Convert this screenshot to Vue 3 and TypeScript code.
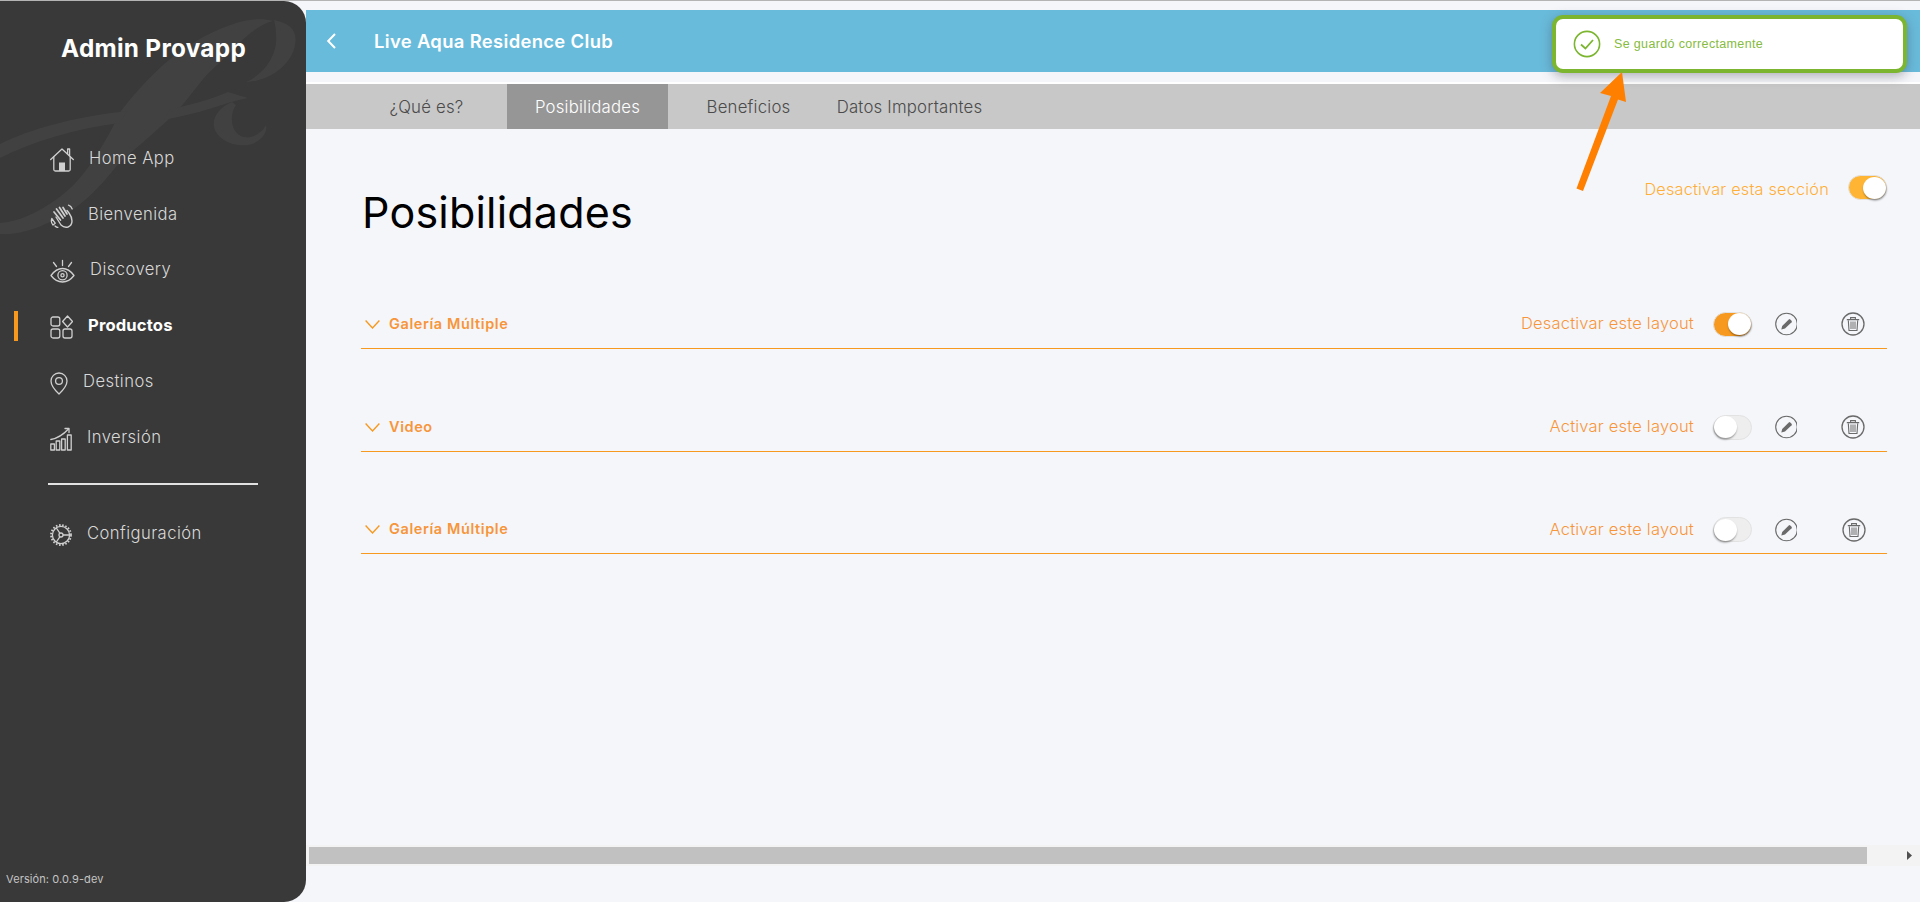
<script setup lang="ts">
interface NavItem { label: string; icon: string; w: number; active?: boolean }
const nav: NavItem[] = [
  { label: 'Home App', icon: 'home', w: 24 },
  { label: 'Bienvenida', icon: 'clap', w: 23 },
  { label: 'Discovery', icon: 'eye', w: 25 },
  { label: 'Productos', icon: 'grid', w: 23, active: true },
  { label: 'Destinos', icon: 'pin', w: 18 },
  { label: 'Inversión', icon: 'chart', w: 22 },
]
const tabs = ['¿Qué es?', 'Posibilidades', 'Beneficios', 'Datos Importantes']
const rows = [
  { title: 'Galería Múltiple', action: 'Desactivar este layout', on: true },
  { title: 'Video', action: 'Activar este layout', on: false },
  { title: 'Galería Múltiple', action: 'Activar este layout', on: false },
]
</script>

<template>
  <div class="page">
    <aside class="sidebar">
      <svg class="watermark" width="306" height="260" viewBox="0 0 306 260" aria-hidden="true">
        <path d="M0 222C24 220 48 206 67 190C88 172 106 140 121 110C138 88 163 60 190 44C215 28 250 13 273 20C257 24 243 38 236 46C224 58 214 66 204 77C192 92 182 106 170 117C152 134 136 147 119 162C107 177 97 189 85 199C70 212 60 217 50 221C34 229 16 234 0 233Z" />
        <path d="M274 19C290 22 298 30 295 44C292 62 272 80 246 81C266 72 278 52 276 34C276 28 275 23 274 19Z" />
        <path d="M0 143C30 128 74 116 127 110L120 122C74 128 34 140 0 157Z" />
        <path d="M170 108C190 104 212 98 228 91L248 97C240 99 234 100 228 102C210 108 190 114 164 119Z" />
        <path d="M232 101C220 106 212 116 214 126C217 138 232 146 248 144C260 142 268 132 266 124C262 132 252 138 244 136C232 134 228 116 236 104Z" />
      </svg>

      <div class="brand">Admin Provapp</div>

      <nav class="nav">
        <a v-for="item in nav" :key="item.label" class="nav-item" :class="{ active: item.active }">
          <svg class="nav-icon" :style="{ width: item.w + 'px' }" :viewBox="`0 0 ${item.w} 24`" fill="none" stroke="currentColor" stroke-width="1.3" stroke-linecap="round" stroke-linejoin="round">
            <template v-if="item.icon === 'home'">
              <path d="M0.7 11.5L12 1L23.3 11.5" />
              <path d="M17.6 5.5V1H19.6V7.5" />
              <path d="M3.8 9V21.5Q3.8 23 5.3 23H18.7Q20.2 23 20.2 21.5V9" />
              <rect x="9" y="14.5" width="6" height="8.5" fill="currentColor" stroke="none" />
            </template>
            <template v-else-if="item.icon === 'clap'">
              <path d="M6 13L11 21Q14 24 18 23Q22 21.5 22 17Q22 13 19 9L17 6.500" stroke-width="1.4" />
              <path d="M4 8L10.500 16M6.500 5L13 14M9.500 3.500L15 12M13 3.500L17 10" stroke-width="1.7" />
              <path d="M18.500 1.200Q21.200 2 22.200 5" stroke-width="1.3" />
              <path d="M1.800 14.500Q0.500 18.500 3 21L5.200 19.200Z" stroke-width="1.3" />
              <path d="M5 22Q6.500 23.500 8 23.300" stroke-width="1.2" />
            </template>
            <template v-else-if="item.icon === 'eye'">
              <path d="M1 16.5Q6 9.5 12.5 9.5Q19 9.5 24 16.5Q19 23 12.5 23Q6 23 1 16.5Z" />
              <circle cx="12.5" cy="16.3" r="4.6" />
              <circle cx="12.5" cy="16.3" r="1.6" />
              <path d="M12.5 1.5V6.5M3.5 3.5L6.5 7.5M21.5 3.5L18.5 7.5" />
            </template>
            <template v-else-if="item.icon === 'grid'">
              <rect x="1" y="2" width="8.8" height="9" rx="2" />
              <rect x="1" y="14" width="8.8" height="9" rx="2" />
              <rect x="13" y="14" width="9" height="9" rx="2" />
              <path d="M17.5 1L22.5 6.5L17.5 12L12.6 6.5Z" />
            </template>
            <template v-else-if="item.icon === 'pin'">
              <path d="M9 23Q1 15.5 1 10A8 8 0 0 1 17 10Q17 15.5 9 23Z" />
              <circle cx="9" cy="10" r="3.4" />
            </template>
            <template v-else-if="item.icon === 'chart'">
              <rect x="0.8" y="17" width="3.6" height="6" />
              <rect x="6.2" y="14" width="3.6" height="9" />
              <rect x="11.6" y="12" width="3.6" height="11" />
              <rect x="17.4" y="8" width="3.8" height="15" />
              <path d="M0.8 12.5Q10 11 18.5 2" />
              <path d="M15 1.5H19V5.5" />
            </template>
          </svg>
          <span>{{ item.label }}</span>
        </a>
      </nav>

      <div class="divider"></div>

      <a class="nav-item config">
        <svg class="nav-icon" width="22" viewBox="0 0 22 24" fill="none" stroke="currentColor" stroke-width="1.3" stroke-linejoin="round">
          <circle cx="11" cy="12" r="8.6" />
          <circle cx="11" cy="12" r="10" stroke-width="1.8" stroke-dasharray="1.6 1.6" />
          <circle cx="11" cy="12" r="2" />
          <path d="M13 12H20M10 10.3L6 4.5M10 13.7L6 19.5" />
        </svg>
        <span>Configuración</span>
      </a>

      <div class="version">Versión: 0.0.9-dev</div>
    </aside>

    <main class="main">
      <header class="topbar">
        <svg class="back" width="11" height="16" viewBox="0 0 11 16" fill="none" stroke="#fff" stroke-width="2">
          <path d="M9 1L2.2 8L9 15" />
        </svg>
        <h2 class="topbar-title">Live Aqua Residence Club</h2>
      </header>

      <div class="tabs">
        <div v-for="(tab, i) in tabs" :key="tab" class="tab" :class="{ current: i === 1 }">{{ tab }}</div>
      </div>

      <section class="content">
        <div class="title-row">
          <h1 class="title">Posibilidades</h1>
          <div class="section-toggle">
            <span class="section-label">Desactivar esta sección</span>
            <span class="toggle on amber"><i></i></span>
          </div>
        </div>

        <div v-for="(row, i) in rows" :key="i" class="row">
          <div class="row-left">
            <svg width="15" height="9" viewBox="0 0 15 9" fill="none" stroke="#f7991f" stroke-width="1.4">
              <path d="M0.6 0.6L7.5 8L14.4 0.6" />
            </svg>
            <span class="row-title">{{ row.title }}</span>
          </div>
          <div class="row-right">
            <span class="row-action">{{ row.action }}</span>
            <span class="toggle" :class="{ on: row.on }"><i></i></span>
            <svg class="pencil" width="22" height="24" viewBox="0 0 22 24" fill="none">
              <circle cx="11.5" cy="12" r="10.8" stroke="#6a6a6a" stroke-width="1.1" />
              <path d="M6.300 17.500L7.200 14L13.800 7.400Q14.500 6.800 15.200 7.400L16.600 8.800Q17.200 9.500 16.600 10.200L10 16.600Z" fill="#6a6a6a" />
            </svg>
            <svg class="trash" :class="{ nudged: i === 2 }" width="24" height="24" viewBox="0 0 24 24" fill="none" stroke="#6a6a6a">
              <circle cx="12" cy="12" r="11" stroke-width="1.3" />
              <path d="M5.8 7.6H18.2M9.6 7.2V5.6H14.4V7.2" stroke-width="1.1" />
              <path d="M7.3 8.4L8 18.5H16L16.7 8.4" stroke-width="1.1" />
              <path d="M10 9.5V17M12 9.5V17M14 9.5V17" stroke-width="1" />
            </svg>
          </div>
        </div>
      </section>

      <div class="scrollbar">
        <div class="thumb"></div>
        <svg class="scroll-arrow" width="5" height="9" viewBox="0 0 5 9"><path d="M0 0L5 4.5L0 9Z" fill="#505050" /></svg>
      </div>
    </main>

    <div class="toast">
      <svg width="28" height="28" viewBox="0 0 28 28" fill="none" stroke="#7cb52f">
        <circle cx="14" cy="14" r="12.6" stroke-width="1.6" />
        <path d="M8 14.5L12.4 18.5L20 10" stroke-width="1.8" />
      </svg>
      <span>Se guardó correctamente</span>
    </div>

    <svg class="arrow" width="60" height="130" viewBox="0 0 60 130">
      <path d="M49 1L53 31L45 28.500L10 120L3.500 117.500L38 25L27 22Z" fill="#ff8000" />
    </svg>
  </div>
</template>

<style>
html, body { margin: 0; padding: 0; background: #f5f6fa; overflow: hidden; }
</style>

<style scoped>
.page {
  position: relative;
  display: flex;
  height: 902px;
  box-sizing: border-box;
  border-top: 1px solid #b4b4b4;
  background: #f5f6fa;
  font-family: Inter, "Noto Sans", sans-serif;
  overflow: hidden;
}
.sidebar {
  position: relative;
  flex: 0 0 306px;
  background: #393939;
  border-radius: 0 22px 22px 0;
  overflow: hidden;
  color: #c9c9c9;
  display: flex;
  flex-direction: column;
}
.watermark { position: absolute; left: 0; top: 0; fill: #414141; }
.brand {
  position: relative;
  margin-top: 33px;
  margin-left: 61px;
  color: #fff;
  font-weight: 700;
  font-size: 24.3px;
  line-height: 28px;
  letter-spacing: 0.3px;
  white-space: nowrap;
}
.nav {
  position: relative;
  margin-top: 70px;
  display: flex;
  flex-direction: column;
}
.nav-item {
  display: flex;
  align-items: center;
  gap: 15px;
  height: 55.8px;
  padding-left: 50px;
  font-size: 16.6px;
  font-weight: 300;
  letter-spacing: 0.45px;
  color: #d8d8d8;
  position: relative;
}
.nav-item span { position: relative; top: -2px; }
.nav-icon { height: 24px; color: #cfcfcf; flex: none; }
.nav-item.active { color: #fff; font-weight: 700; letter-spacing: 0.15px; }
.nav-item.active::before {
  content: "";
  position: absolute;
  left: 14px;
  top: 12px;
  width: 4px;
  height: 30px;
  background: #f7991f;
}
.divider {
  position: relative;
  margin: 16.5px 0 0 48px;
  width: 210px;
  height: 2px;
  background: #e2e2e2;
}
.nav-item.config { margin-top: 22px; }
.version {
  margin-top: auto;
  margin-bottom: 16px;
  margin-left: 6px;
  font-size: 11px;
  line-height: 14px;
  font-weight: 400;
  color: #c4c4c4;
  letter-spacing: 0.1px;
}
.main {
  flex: 1;
  min-width: 0;
  display: flex;
  flex-direction: column;
}
.topbar {
  margin-top: 9px;
  height: 62px;
  background: #69bbdb;
  display: flex;
  align-items: center;
  padding-left: 20px;
  flex: none;
}
.topbar-title {
  margin: 0 0 0 37px;
  color: #fff;
  font-size: 18.4px;
  font-weight: 600;
  letter-spacing: 0.35px;
  white-space: nowrap;
}
.tabs {
  margin-top: 10px;
  border-top: 2px solid #fff;
  height: 45px;
  background: #c8c8c8;
  display: flex;
  padding-left: 40px;
  flex: none;
}
.tab {
  width: 161px;
  display: flex;
  align-items: center;
  justify-content: center;
  font-size: 16.8px;
  font-weight: 300;
  color: #4b4b4b;
  letter-spacing: 0.2px;
  white-space: nowrap;
}
.tab.current { background: #969696; color: #fff; }
.content {
  flex: 1;
  padding: 0 33px 0 55px;
}
.title-row {
  display: flex;
  justify-content: space-between;
  align-items: flex-start;
  padding-top: 46px;
  margin-bottom: 9.2px;
}
.title {
  margin: 12px 0 0 1px;
  font-size: 43px;
  line-height: 50px;
  font-weight: 400;
  letter-spacing: 0.2px;
  color: #000;
}
.section-toggle {
  display: flex;
  align-items: center;
  gap: 19px;
  height: 25px;
  font-size: 16.3px;
  font-weight: 300;
  color: #ffae36;
  letter-spacing: 0.2px;
}
.section-label { position: relative; top: 1px; }
.row {
  box-sizing: border-box;
  height: 102.7px;
  border-bottom: 1.4px solid #f7991f;
  display: flex;
  justify-content: space-between;
  align-items: flex-end;
  padding-bottom: 11.5px;
}
.row-left {
  display: flex;
  align-items: center;
  gap: 9px;
  padding-left: 4px;
  height: 24px;
}
.row-title {
  position: relative;
  top: -1px;
  color: #f7953a;
  font-size: 14.5px;
  font-weight: 600;
  letter-spacing: 0.6px;
}
.row-right {
  display: flex;
  align-items: center;
  height: 24px;
  padding-right: 22px;
}
.row-action {
  position: relative;
  top: -1px;
  font-size: 16.5px;
  font-weight: 300;
  color: #f7953a;
  letter-spacing: 0.2px;
  margin-right: 19px;
}
.toggle {
  position: relative;
  display: block;
  box-sizing: border-box;
  width: 39px;
  height: 25px;
  border-radius: 13px;
  background: #eeeeee;
  border: 1px solid #e2e2e2;
  flex: none;
}
.toggle i {
  position: absolute;
  left: 0;
  top: 0.5px;
  width: 23px;
  height: 22px;
  border-radius: 50%;
  background: #fff;
  box-shadow: -0.5px 1.5px 2px rgba(0, 0, 0, 0.4);
}
.toggle.on { background: #f7991f; }
.toggle.on i { left: 14px; box-shadow: 0.5px 1.5px 2px rgba(0, 0, 0, 0.4); }
.toggle.amber { background: #ffb533; }
.pencil { margin-left: 23px; flex: none; }
.trash { margin-left: 44px; flex: none; }
.trash.nudged { transform: translateX(1px); }
.scrollbar {
  flex: none;
  height: 21px;
  margin-bottom: 36px;
  background: #f3f3f3;
  display: flex;
  align-items: center;
  padding-left: 3px;
}
.thumb {
  width: 1558px;
  height: 17px;
  background: #c1c1c1;
}
.scroll-arrow { margin-left: 40px; }
.toast {
  position: absolute;
  left: 1552px;
  top: 14px;
  box-sizing: border-box;
  width: 355px;
  height: 58px;
  background: #fff;
  border: 4px solid #7cb52f;
  border-radius: 11px;
  box-shadow: 0 3px 12px rgba(60, 60, 80, 0.4);
  display: flex;
  align-items: center;
  gap: 13px;
  padding-left: 17px;
  color: #85bb3e;
  font-family: "Liberation Sans", Arial, sans-serif;
  font-size: 12.5px;
  letter-spacing: 0.35px;
}
.arrow {
  position: absolute;
  left: 1573px;
  top: 70px;
}
</style>
